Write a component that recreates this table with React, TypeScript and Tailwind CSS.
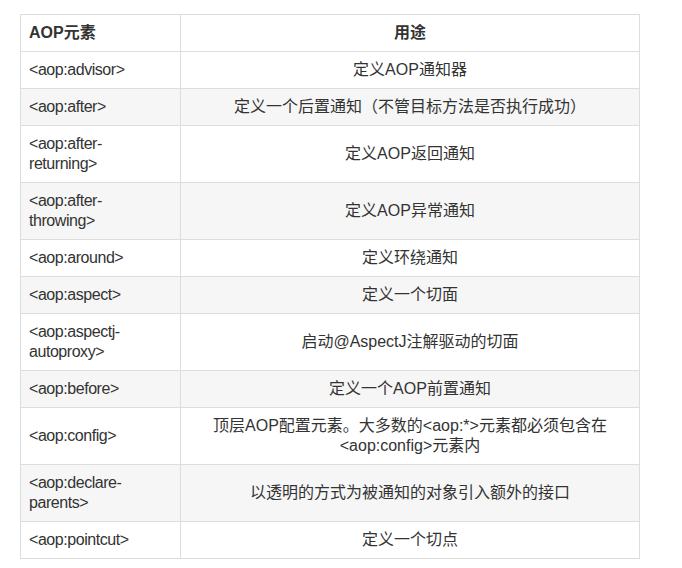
import React from "react";

const rows: [string[], React.ReactNode][] = [
  [["<aop:advisor>"], "定义AOP通知器"],
  [["<aop:after>"], "定义一个后置通知（不管目标方法是否执行成功）"],
  [["<aop:after-", "returning>"], "定义AOP返回通知"],
  [["<aop:after-", "throwing>"], "定义AOP异常通知"],
  [["<aop:around>"], "定义环绕通知"],
  [["<aop:aspect>"], "定义一个切面"],
  [["<aop:aspectj-", "autoproxy>"], "启动@AspectJ注解驱动的切面"],
  [["<aop:before>"], "定义一个AOP前置通知"],
  [
    ["<aop:config>"],
    <>
      顶层AOP配置元素。大多数的&lt;aop:*&gt;元素都必须包含在
      <br />
      &lt;aop:config&gt;元素内
    </>,
  ],
  [["<aop:declare-", "parents>"], "以透明的方式为被通知的对象引入额外的接口"],
  [["<aop:pointcut>"], "定义一个切点"],
];

export default function App() {
  return (
    <div
      className="min-h-[568px] w-[682px] bg-white pt-[14px] pl-[20px] text-[#333]"
      style={{ fontFamily: '"Liberation Sans", "Noto Sans CJK SC", sans-serif' }}
    >
      <table className="w-[620px] border-collapse text-[16px] leading-[20px]">
        <colgroup>
          <col className="w-[160px]" />
          <col />
        </colgroup>
        <thead>
          <tr className="bg-white">
            <th className="border border-[#ddd] px-[8px] py-[8px] text-left font-bold">AOP元素</th>
            <th className="border border-[#ddd] px-[8px] py-[8px] text-center font-bold">用途</th>
          </tr>
        </thead>
        <tbody>
          {rows.map(([a, b], i) => (
            <tr key={i} className={i % 2 === 1 ? "bg-[#f6f6f6]" : "bg-white"}>
              <td className="border border-[#ddd] px-[8px] py-[8px] align-middle tracking-[-0.45px]">
                {a.map((l, j) => (
                  <div key={j}>{l}</div>
                ))}
              </td>
              <td className="border border-[#ddd] px-[8px] py-[8px] text-center align-middle">{b}</td>
            </tr>
          ))}
        </tbody>
      </table>
    </div>
  );
}
